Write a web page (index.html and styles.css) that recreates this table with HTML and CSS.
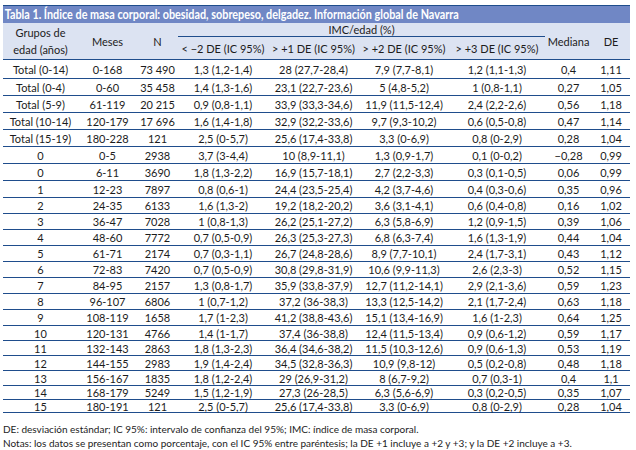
FILE: index.html
```html
<!DOCTYPE html>
<html lang="es">
<head>
<meta charset="utf-8">
<title>Tabla 1</title>
<link rel="stylesheet" href="styles.css">
</head>
<body>
<div class="wrap">
  <div class="title"><span class="title-text">Tabla 1. Índice de masa corporal: obesidad, sobrepeso, delgadez. Información global de Navarra</span></div>
  <table class="data">
    <colgroup>
      <col class="c1"><col class="c2"><col class="c3"><col class="c4"><col class="c5"><col class="c6"><col class="c7"><col class="c8"><col class="c9">
    </colgroup>
    <thead>
      <tr class="h1">
        <th rowspan="2" class="grp">Grupos de<br>edad (años)</th>
        <th rowspan="2">Meses</th>
        <th rowspan="2">N</th>
        <th colspan="4" class="imc">IMC/edad (%)</th>
        <th rowspan="2">Mediana</th>
        <th rowspan="2">DE</th>
      </tr>
      <tr class="h2">
        <th>&lt; −2 DE (IC 95%)</th>
        <th>&gt; +1 DE (IC 95%)</th>
        <th>&gt; +2 DE (IC 95%)</th>
        <th>&gt; +3 DE (IC 95%)</th>
      </tr>
    </thead>
    <tbody>
      <tr><td>Total (0-14)</td><td>0-168</td><td>73 490</td><td>1,3 (1,2-1,4)</td><td>28 (27,7-28,4)</td><td>7,9 (7,7-8,1)</td><td>1,2 (1,1-1,3)</td><td>0,4</td><td>1,11</td></tr>
      <tr><td>Total (0-4)</td><td>0-60</td><td>35 458</td><td>1,4 (1,3-1,6)</td><td>23,1 (22,7-23,6)</td><td>5 (4,8-5,2)</td><td>1 (0,8-1,1)</td><td>0,27</td><td>1,05</td></tr>
      <tr><td>Total (5-9)</td><td>61-119</td><td>20 215</td><td>0,9 (0,8-1,1)</td><td>33,9 (33,3-34,6)</td><td>11,9 (11,5-12,4)</td><td>2,4 (2,2-2,6)</td><td>0,56</td><td>1,18</td></tr>
      <tr><td>Total (10-14)</td><td>120-179</td><td>17 696</td><td>1,6 (1,4-1,8)</td><td>32,9 (32,2-33,6)</td><td>9,7 (9,3-10,2)</td><td>0,6 (0,5-0,8)</td><td>0,47</td><td>1,14</td></tr>
      <tr><td>Total (15-19)</td><td>180-228</td><td>121</td><td>2,5 (0-5,7)</td><td>25,6 (17,4-33,8)</td><td>3,3 (0-6,9)</td><td>0,8 (0-2,9)</td><td>0,28</td><td>1,04</td></tr>
      <tr><td>0</td><td>0-5</td><td>2938</td><td>3,7 (3-4,4)</td><td>10 (8,9-11,1)</td><td>1,3 (0,9-1,7)</td><td>0,1 (0-0,2)</td><td>−0,28</td><td>0,99</td></tr>
      <tr><td>0</td><td>6-11</td><td>3690</td><td>1,8 (1,3-2,2)</td><td>16,9 (15,7-18,1)</td><td>2,7 (2,2-3,3)</td><td>0,3 (0,1-0,5)</td><td>0,06</td><td>0,99</td></tr>
      <tr><td>1</td><td>12-23</td><td>7897</td><td>0,8 (0,6-1)</td><td>24,4 (23,5-25,4)</td><td>4,2 (3,7-4,6)</td><td>0,4 (0,3-0,6)</td><td>0,35</td><td>0,96</td></tr>
      <tr><td>2</td><td>24-35</td><td>6133</td><td>1,6 (1,3-2)</td><td>19,2 (18,2-20,2)</td><td>3,6 (3,1-4,1)</td><td>0,6 (0,4-0,8)</td><td>0,16</td><td>1,02</td></tr>
      <tr><td>3</td><td>36-47</td><td>7028</td><td>1 (0,8-1,3)</td><td>26,2 (25,1-27,2)</td><td>6,3 (5,8-6,9)</td><td>1,2 (0,9-1,5)</td><td>0,39</td><td>1,06</td></tr>
      <tr><td>4</td><td>48-60</td><td>7772</td><td>0,7 (0,5-0,9)</td><td>26,3 (25,3-27,3)</td><td>6,8 (6,3-7,4)</td><td>1,6 (1,3-1,9)</td><td>0,44</td><td>1,04</td></tr>
      <tr><td>5</td><td>61-71</td><td>2174</td><td>0,7 (0,3-1,1)</td><td>26,7 (24,8-28,6)</td><td>8,9 (7,7-10,1)</td><td>2,4 (1,7-3,1)</td><td>0,43</td><td>1,12</td></tr>
      <tr><td>6</td><td>72-83</td><td>7420</td><td>0,7 (0,5-0,9)</td><td>30,8 (29,8-31,9)</td><td>10,6 (9,9-11,3)</td><td>2,6 (2,3-3)</td><td>0,52</td><td>1,15</td></tr>
      <tr><td>7</td><td>84-95</td><td>2157</td><td>1,3 (0,8-1,7)</td><td>35,9 (33,8-37,9)</td><td>12,7 (11,2-14,1)</td><td>2,9 (2,1-3,6)</td><td>0,59</td><td>1,23</td></tr>
      <tr><td>8</td><td>96-107</td><td>6806</td><td>1 (0,7-1,2)</td><td>37,2 (36-38,3)</td><td>13,3 (12,5-14,2)</td><td>2,1 (1,7-2,4)</td><td>0,63</td><td>1,18</td></tr>
      <tr><td>9</td><td>108-119</td><td>1658</td><td>1,7 (1-2,3)</td><td>41,2 (38,8-43,6)</td><td>15,1 (13,4-16,9)</td><td>1,6 (1-2,3)</td><td>0,64</td><td>1,25</td></tr>
      <tr><td>10</td><td>120-131</td><td>4766</td><td>1,4 (1-1,7)</td><td>37,4 (36-38,8)</td><td>12,4 (11,5-13,4)</td><td>0,9 (0,6-1,2)</td><td>0,59</td><td>1,17</td></tr>
      <tr><td>11</td><td>132-143</td><td>2863</td><td>1,8 (1,3-2,3)</td><td>36,4 (34,6-38,2)</td><td>11,5 (10,3-12,6)</td><td>0,9 (0,6-1,3)</td><td>0,53</td><td>1,19</td></tr>
      <tr><td>12</td><td>144-155</td><td>2983</td><td>1,9 (1,4-2,4)</td><td>34,5 (32,8-36,3)</td><td>10,9 (9,8-12)</td><td>0,5 (0,2-0,8)</td><td>0,48</td><td>1,18</td></tr>
      <tr><td>13</td><td>156-167</td><td>1835</td><td>1,8 (1,2-2,4)</td><td>29 (26,9-31,2)</td><td>8 (6,7-9,2)</td><td>0,7 (0,3-1)</td><td>0,4</td><td>1,1</td></tr>
      <tr><td>14</td><td>168-179</td><td>5249</td><td>1,5 (1,2-1,9)</td><td>27,3 (26-28,5)</td><td>6,3 (5,6-6,9)</td><td>0,3 (0,2-0,5)</td><td>0,35</td><td>1,07</td></tr>
      <tr><td>15</td><td>180-191</td><td>121</td><td>2,5 (0-5,7)</td><td>25,6 (17,4-33,8)</td><td>3,3 (0-6,9)</td><td>0,8 (0-2,9)</td><td>0,28</td><td>1,04</td></tr>
    </tbody>
  </table>
  <div class="notes">
    <p>DE: desviación estándar; IC 95%: intervalo de confianza del 95%; IMC: índice de masa corporal.</p>
    <p>Notas: los datos se presentan como porcentaje, con el IC 95% entre paréntesis; la DE +1 incluye a +2 y +3; y la DE +2 incluye a +3.</p>
  </div>
</div>
</body>
</html>
```
FILE: styles.css
```css
html, body {
  margin: 0;
  padding: 0;
  background: #ffffff;
}

body {
  font-family: "Lato", "Liberation Sans", sans-serif;
  color: #1c1c1c;
}

.wrap {
  width: 627px;
  padding: 5px 0 0 3px;
}

.title {
  height: 17px;
  border-top: 1px solid #1f4d8c;
  background: #7087c5;
  color: #ffffff;
  font-weight: 700;
  font-size: 13px;
  line-height: 17px;
  white-space: nowrap;
  overflow: hidden;
}

.title-text {
  display: inline-block;
  padding-left: 2px;
  transform: scaleX(0.832);
  transform-origin: left center;
}

.data {
  width: 627px;
  table-layout: fixed;
  border-collapse: separate;
  border-spacing: 0;
  font-size: 11px;
}

.c1 { width: 75px; }
.c2 { width: 59px; }
.c3 { width: 41px; }
.c4 { width: 90px; }
.c5 { width: 91px; }
.c6 { width: 90px; }
.c7 { width: 96px; }
.c8 { width: 47px; }
.c9 { width: 38px; }

.data th,
.data td {
  padding: 0;
  text-align: center;
  white-space: nowrap;
  box-sizing: border-box;
}

.data thead th {
  background: #dce3f2;
  font-weight: 400;
  font-size: 11px;
  line-height: 13px;
  border-bottom: 1px solid #1f4d8c;
  vertical-align: middle;
}

.data thead .h1 .imc {
  height: 14px;
  line-height: 12px;
}

.data thead .h2 th {
  height: 23px;
  padding-top: 1px;
}

.data thead .grp {
  line-height: 17px;
}

.data tbody td {
  height: 16px;
  line-height: 11px;
  border-bottom: 1px solid #1f4d8c;
  vertical-align: middle;
}

.data tbody tr:nth-child(-n+8) td { height: 17px; }
.data tbody tr:nth-child(1) td { height: 19px; }
.data tbody tr:nth-child(n+17) td { height: 15px; }
.data tbody tr:nth-child(21) td { height: 14px; }
.data tbody tr:nth-child(22) td { height: 13px; }

.notes {
  margin-top: 9px;
  font-size: 10px;
  line-height: 14px;
  color: #1c1c1c;
}

.notes p {
  margin: 0;
  white-space: nowrap;
}
```
